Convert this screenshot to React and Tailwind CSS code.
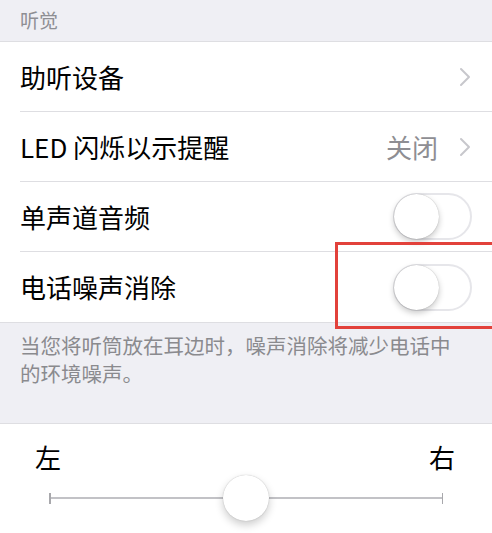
import React from "react";

// iOS-style toggle, off state
function Toggle() {
  return (
    <div className="relative w-[79px] h-[47px] rounded-full border-2 border-[#e6e6ea] bg-white">
      <div className="absolute -left-[1px] -top-[1px] size-[45px] rounded-full bg-white shadow-[0_3px_6px_rgba(0,0,0,0.22),0_0_1px_rgba(0,0,0,0.3)]" />
    </div>
  );
}

function Chevron() {
  return (
    <svg width="14" height="20" viewBox="0 0 14 20" fill="none">
      <path d="M3 2 L11 10 L3 18" stroke="#c7c7cc" strokeWidth="2" strokeLinecap="round" strokeLinejoin="round" />
    </svg>
  );
}

function Row({ label, right, last, children }) {
  return (
    <div className="relative h-[70px] pl-5">
      <div
        className={
          "h-full flex items-center justify-between pr-5 " +
          (last ? "" : "border-b border-[#dedee2]")
        }
      >
        <span className="text-[26px] text-black leading-none">{label}</span>
        {right}
      </div>
      {children}
    </div>
  );
}

export default function App() {
  return (
    <div className="w-[492px] h-[533px] overflow-hidden bg-[#efeff4] font-['Noto_Sans_CJK_SC','Noto_Sans',sans-serif]">
      {/* section header */}
      <div className="h-[42px] px-5 flex items-center text-[19px] text-[#8e8e93] border-b border-[#dedee2]">
        听觉
      </div>

      <div className="bg-white">
        <Row label="助听设备" right={<Chevron />} />
        <Row
          label="LED 闪烁以示提醒"
          right={
            <div className="flex items-center gap-[20px]">
              <span className="text-[26px] text-[#8e8e93] leading-none">关闭</span>
              <Chevron />
            </div>
          }
        />
        <Row label="单声道音频" right={<Toggle />} />
        <Row label="电话噪声消除" right={<Toggle />} last>
          <div className="absolute left-[335px] -top-[10px] -bottom-[7px] -right-[6px] border-[3px] border-[#e2413b]" />
        </Row>
      </div>

      {/* footer note */}
      <div className="h-[101px] border-t border-[#dedee2] px-5 pt-[8px] text-[20.5px] leading-[28px] text-[#8a8a8e] whitespace-nowrap">
        当您将听筒放在耳边时，噪声消除将减少电话中
        <br />
        的环境噪声。
      </div>

      {/* balance slider */}
      <div className="bg-white border-t border-[#dedee2] h-[110px]">
        <div className="flex justify-between pl-[35px] pr-[37px] pt-[20px] text-[26px] leading-[26px] text-black">
          <span>左</span>
          <span>右</span>
        </div>
        <div className="relative mx-[49px] mt-[5px] h-[46px] flex items-center">
          <div className="w-[1.5px] h-[11px] bg-[#a8a8ac]" />
          <div className="flex-1 h-[2px] bg-[#c2c2c6]" />
          <div className="w-[1.5px] h-[11px] bg-[#a8a8ac]" />
          <div className="absolute left-[174px] top-0 size-[46px] rounded-full bg-white shadow-[0_4px_8px_rgba(0,0,0,0.2),0_0_1px_rgba(0,0,0,0.3)]" />
        </div>
      </div>
    </div>
  );
}
